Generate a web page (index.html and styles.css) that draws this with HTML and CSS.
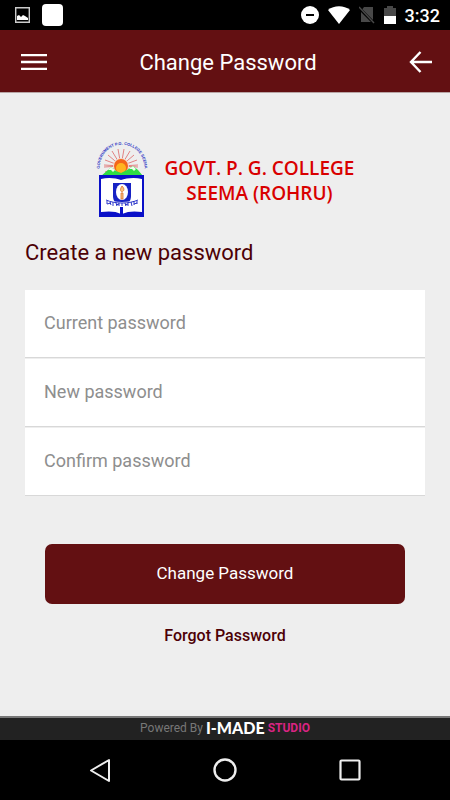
FILE: index.html
```html
<!DOCTYPE html>
<html lang="en">
<head>
	<meta charset="UTF-8">
	<meta name="viewport" content="width=device-width, initial-scale=1">
	<title>Change Password</title>
	<link rel="stylesheet" href="styles.css">
</head>

<body>

<div class="status-bar">
	<div class="status-group status-left">
		<svg width="15" height="16" viewBox="0 0 15 16"><path d="M.7.7h13.6v14.6H.7z" fill="none" stroke="#ccc" stroke-width="1.4"/><path d="M2 13V9l2-1 2 2 2-2 2 1 3 2v2z" fill="#fff"/></svg>
		<span class="app-badge"></span>
	</div>
	<div class="status-group status-right">
		<svg width="18" height="18" viewBox="0 0 18 18"><circle cx="9" cy="9" r="9" fill="#fff"/><path d="M5 9h8" stroke="#000" stroke-width="2"/></svg>
		<svg width="22" height="18" viewBox="0 0 22 18"><path d="M0 4C6-1 16-1 22 4L11 18z" fill="#fff"/></svg>
		<svg width="16" height="18" viewBox="0 0 16 18"><path d="M5 1h9v15H2V5z" fill="#484848"/><path d="M0 2l15 15" stroke="#000" stroke-width="3"/><path d="M0 1l15 16" stroke="#484848" stroke-width="1.4"/></svg>
		<svg width="12" height="18" viewBox="0 0 12 18"><path d="M0 2h3V0h6v2h3v8H0z" fill="#484848"/><path d="M0 10h12v8H0z" fill="#fff"/></svg>
		<span class="time">3:32</span>
	</div>
</div>

<header class="app-bar">
	<button type="button" class="icon-button" aria-label="Menu">
		<svg width="26" height="16" viewBox="0 0 26 16"><path d="M0 1.200h26M0 8h26M0 14.800h26" stroke="#fff" stroke-width="2.300"/></svg>
	</button>
	<h1>Change Password</h1>
	<button type="button" class="icon-button" aria-label="Back">
		<svg width="23" height="22" viewBox="0 0 23 22" fill="none" stroke="#fff" stroke-width="2.4"><path d="M11.5 1L2 11l9.500 10M2 11h21"/></svg>
	</button>
</header>

<main>
	<div class="brand">
		<svg class="emblem" width="54" height="78" viewBox="0 0 54 78">
			<path id="arc" d="M4 37C-3-6 55-6 48 37" fill="none"/>
			<text class="arc-text" text-anchor="middle"><textPath href="#arc" startOffset="50%">GOVERNMENT P.G. COLLEGE SEEMA</textPath></text>
			<!-- sun and rays -->
			<path d="M8 25l34 2M9 20l32 12M12 15l26 22M16 11l18 30M22 9l6 34M28 9l-6 34M34 11L16 41M38 15L12 37M41 20L9 32M42 25L8 27" stroke="#d66" stroke-width=".8"/>
			<circle cx="25" cy="26" r="8" fill="#f3d9cd"/>
			<circle cx="25" cy="26" r="7" fill="#f4661a"/>
			<circle cx="25" cy="28" r="5" fill="#ffb520"/>
			<!-- mountains -->
			<path d="M5 36l7-6 3-3 5 4 5 2 6-3 6-4 5 4 5 6z" fill="#2fdc44"/>
			<path d="M12 30l3-3 4 3-2 2-2-2zM33 29l4-3 3 3-2 2-2-2z" fill="#efe"/>
			<!-- book -->
			<path d="M3 35h45v42H3z" fill="#0a10c8"/>
			<path d="M5 39c7-2 15-1 20 1 5-2 14-3 21-1v33c-7-1-14-1-20 2h-1c-5-3-13-3-20-2z" fill="#fff"/>
			<path d="M17 43h18v13c0 6-4 9-9 10-5-1-9-4-9-10z" fill="#1722c4"/>
			<ellipse cx="26" cy="52" rx="6" ry="8" fill="#fff"/>
			<path d="M26 46c3 3 2 5 0 6-2-1-2-3 0-6zM25 53h2v6h-2z" fill="#f8c47c" stroke="#e07030" stroke-width=".8"/>
			<!-- motto ribbon -->
			<path d="M9 59c9 4 25 4 34 0v5c-9 4-25 4-34 0z" fill="#fff"/>
			<path d="M10 60c9 4 23 4 32 0M11 61v3M14 62l1 3M17 62v4M20 63l1 3M23 63v3M26 63v3M29 63l1 3M32 63v3M35 62l1 4M38 61v4M41 61v3M11 64l4-1M20 65l3-1M29 65l3-1M38 64l3-1" fill="none" stroke="#1722c4" stroke-width=".9"/>
			<path d="M25.500 67v9" stroke="#0a10c8" stroke-width="3"/>
		</svg>
		<p class="college">GOVT. P. G. COLLEGE<br>SEEMA (ROHRU)</p>
	</div>

	<form>
		<h2>Create a new password</h2>
		<div class="fields">
			<input type="password" placeholder="Current password" aria-label="Current password">
			<input type="password" placeholder="New password" aria-label="New password">
			<input type="password" placeholder="Confirm password" aria-label="Confirm password">
		</div>
		<button type="submit" class="submit">Change Password</button>
		<a class="forgot" href="#">Forgot Password</a>
	</form>
</main>

<footer>
	<span>Powered By</span>
	<span class="made">I-MADE</span>
	<span class="studio">STUDIO</span>
</footer>

<nav class="system-nav">
	<button type="button" class="icon-button" aria-label="System back">
		<svg width="24" height="24" viewBox="0 0 24 24"><path d="M21 2v21L3 12.500z" fill="none" stroke="#eee" stroke-width="2" stroke-linejoin="round"/></svg>
	</button>
	<button type="button" class="icon-button" aria-label="Home">
		<svg width="24" height="24" viewBox="0 0 24 24"><circle cx="12" cy="12" r="10.500" fill="none" stroke="#eee" stroke-width="2.400"/></svg>
	</button>
	<button type="button" class="icon-button" aria-label="Recent apps">
		<svg width="24" height="24" viewBox="0 0 24 24"><rect x="2.500" y="2.500" width="19" height="19" rx="1" fill="none" stroke="#eee" stroke-width="2.200"/></svg>
	</button>
</nav>

</body>
</html>
```
FILE: styles.css
```css
* {
	box-sizing: border-box;
}

body {
	display: flex;
	flex-direction: column;
	min-height: 100vh;
	margin: 0;
	background: #eee;
	font-family: Roboto, sans-serif;
	color: #4d0005;
}

h1, h2, p {
	margin: 0;
	font-weight: 400;
}

svg {
	display: block;
}

button {
	border: 0;
	font-family: inherit;
	cursor: pointer;
}

.icon-button {
	padding: 0;
	background: none;
}

/* phone status bar */
.status-bar {
	display: flex;
	justify-content: space-between;
	height: 30px;
	padding: 0 10px 0 15px;
	background: #000;
	color: #fff;
}

.status-group {
	display: flex;
	align-items: center;
}

.status-left {
	gap: 12px;
}

.status-right {
	gap: 9px;
}

.app-badge {
	width: 21px;
	height: 22px;
	border-radius: 4px;
	background: #fff;
}

.time {
	font-size: 18px;
	font-weight: 500;
}

/* title bar */
.app-bar {
	display: flex;
	justify-content: space-between;
	align-items: center;
	height: 63px;
	padding: 2px 18px 0 21px;
	border-bottom: 1px solid #b9a5a5;
	background: #631012;
	color: #fff;
}

/* takes the room between the two buttons */
h1 {
	flex: 1;
	font-size: 22px;
	text-align: center;
}

main {
	flex: 1;
	padding: 47px 25px 24px;
}

/* college logo */
.brand {
	display: flex;
	justify-content: center;
	align-items: center;
	gap: 15px;
}

.emblem {
	overflow: visible;
}

.arc-text {
	font: bold 4px "Liberation Sans", sans-serif;
	fill: #2a35c4;
}

.college {
	padding-top: 4px;
	font: 600 19px/25px "Open Sans", sans-serif;
	text-align: center;
	color: #d90000;
}

/* form */
form {
	display: flex;
	flex-direction: column;
}

h2 {
	margin: 20px 0 23px;
	font-size: 22px;
	line-height: 29px;
}

.fields {
	display: flex;
	flex-direction: column;
	gap: 1px;
}

input {
	width: 100%;
	height: 68px;
	padding: 0 19px 2px;
	border: 0;
	border-bottom: 1px solid #d8d8d8;
	border-radius: 0;
	background: #fff;
	font-family: inherit;
	font-size: 18px;
}

input::placeholder {
	color: #8e8e8e;
	opacity: 1;
}

.submit {
	height: 60px;
	margin: 48px 20px 22px;
	padding-bottom: 4px;
	border-radius: 7px;
	background: #631012;
	font-size: 17px;
	color: #fff;
}

.forgot {
	align-self: center;
	font-size: 16px;
	line-height: 20px;
	font-weight: 500;
	color: #4d0005;
	text-decoration: none;
}

footer {
	display: flex;
	justify-content: center;
	align-items: center;
	gap: 3px;
	height: 24px;
	padding-bottom: 3px;
	border-top: 2px solid #777;
	background: #222;
	font-size: 12px;
	color: #777;
}

.made {
	font: 900 16px/20px Lato, sans-serif;
	color: #fff;
}

.studio {
	font: 700 12px/20px Roboto, sans-serif;
	color: #d92482;
}

/* phone navigation */
.system-nav {
	display: flex;
	justify-content: space-between;
	align-items: center;
	height: 60px;
	padding: 0 88px;
	background: #000;
}
```
